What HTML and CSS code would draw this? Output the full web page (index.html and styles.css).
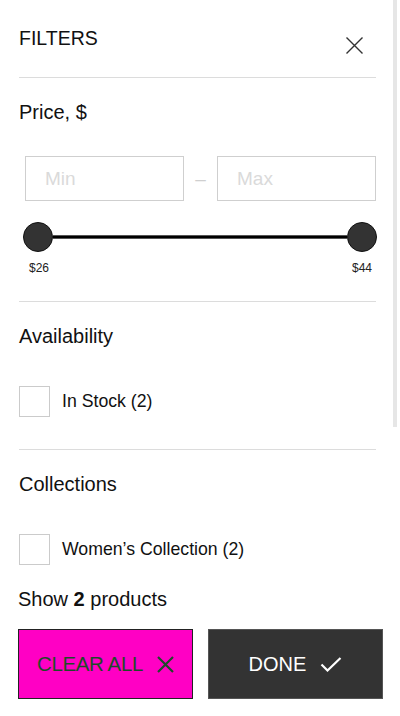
FILE: index.html
```html
<!DOCTYPE html>
<html lang="en">
<head>
  <meta charset="UTF-8">
  <title>Filters</title>
  <link rel="stylesheet" href="styles.css">
</head>
<body>

  <div class="filters">
    <div class="filters-head">
      <h2 class="filters-title">FILTERS</h2>
      <button class="close" aria-label="Close">
        <svg width="17" height="17" viewBox="0 0 17 17"><path d="M0.5 0.5 L16.5 16.5 M16.5 0.5 L0.5 16.5" stroke="#333" stroke-width="1.4" fill="none"/></svg>
      </button>
    </div>

    <div class="group price">
      <h3 class="group-title">Price, $</h3>
      <div class="price-inputs">
        <input class="price-box" type="text" placeholder="Min">
        <span class="dash">–</span>
        <input class="price-box" type="text" placeholder="Max">
      </div>
      <div class="slider">
        <span class="knob"></span>
        <span class="track"></span>
        <span class="knob"></span>
      </div>
      <div class="slider-labels">
        <span>$26</span>
        <span>$44</span>
      </div>
    </div>

    <div class="group">
      <h3 class="group-title">Availability</h3>
      <label class="check">
        <span class="box"></span>
        In Stock (2)
      </label>
    </div>

    <div class="group last">
      <h3 class="group-title">Collections</h3>
      <label class="check">
        <span class="box"></span>
        Women’s Collection (2)
      </label>
    </div>
  </div>

  <div class="footer">
    <p class="count">Show <b>2</b> products</p>
    <div class="actions">
      <button class="btn clear">
        CLEAR ALL
        <svg width="17" height="17" viewBox="0 0 17 17"><path d="M1 1 L16 16 M16 1 L1 16" stroke="#1d4a28" stroke-width="2.2" fill="none"/></svg>
      </button>
      <button class="btn done">
        DONE
        <svg width="22" height="15" viewBox="0 0 22 15"><path d="M1.5 7.5 L7.5 13.5 L20.5 1" stroke="#fff" stroke-width="2.2" fill="none"/></svg>
      </button>
    </div>
  </div>

  <div class="scroll-thumb"></div>

</body>
</html>
```

FILE: styles.css
```css
body {
  margin: 0;
  background: white;
  font-family: "Liberation Sans", Arial, sans-serif;
  color: #111;
}
.filters {
  padding: 0 24px 0 19px;
}
.filters-head {
  display: flex;
  justify-content: space-between;
  align-items: flex-start;
  padding-top: 27px;
  height: 50px;
  border-bottom: 1px solid #dcdcdc;
}
.filters-title {
  margin: 0;
  font-size: 19.5px;
  font-weight: normal;
}
.close {
  margin: 10px 13px 0 0;
  padding: 0;
  border: none;
  background: none;
  line-height: 0;
}
.group {
  padding: 23px 0 32px;
  border-bottom: 1px solid #dcdcdc;
}
.group.price {
  padding-bottom: 26px;
}
.group.last {
  border-bottom: none;
  padding-bottom: 23px;
}
.group-title {
  margin: 0;
  font-size: 20px;
  font-weight: normal;
}
.price-inputs {
  display: flex;
  align-items: center;
  margin: 32px 0 0 6px;
}
.price-box {
  width: 159px;
  height: 45px;
  box-sizing: border-box;
  border: 1px solid #cfcfcf;
  padding: 0 0 0 19px;
  font-family: inherit;
  font-size: 19px;
  outline: none;
}
.price-box::placeholder {
  color: #dadada;
}
.dash {
  width: 33px;
  text-align: center;
  font-size: 19px;
  color: #cfcfcf;
}
.slider {
  display: flex;
  align-items: center;
  margin: 21px 0 0 4px;
  width: 354px;
}
.knob {
  width: 28px;
  height: 28px;
  border-radius: 50%;
  background: #333;
  border: 1px solid #111;
  flex: none;
}
.track {
  flex: 1;
  height: 2px;
  background: #000;
  border-top: 1px solid #555;
  border-bottom: 1px solid #555;
}
.slider-labels {
  display: flex;
  justify-content: space-between;
  padding: 9px 4px 0 10px;
  font-size: 12px;
  color: #222;
}
.check {
  display: flex;
  align-items: center;
  margin-top: 38px;
  font-size: 17.7px;
}
.box {
  width: 29px;
  height: 29px;
  border: 1px solid #cbcbcb;
  margin-right: 12px;
}
.footer {
  padding: 0 17px 0 18px;
}
.count {
  margin: 0;
  font-size: 20px;
}
.actions {
  display: flex;
  gap: 15px;
  margin-top: 18px;
}
.btn {
  flex: 1;
  height: 70px;
  display: flex;
  align-items: center;
  justify-content: center;
  gap: 14px;
  font-family: inherit;
  font-size: 20px;
  padding: 0;
}
.clear {
  background: #ff00c4;
  border: 1px solid #222;
  color: #1d4a28;
  font-size: 20.5px;
  letter-spacing: -0.4px;
}
.done {
  background: #333;
  border: 1px solid #555;
  color: white;
}
.scroll-thumb {
  position: fixed;
  top: 0;
  right: 3px;
  width: 4px;
  height: 427px;
  background: #e6e6e6;
}
```
